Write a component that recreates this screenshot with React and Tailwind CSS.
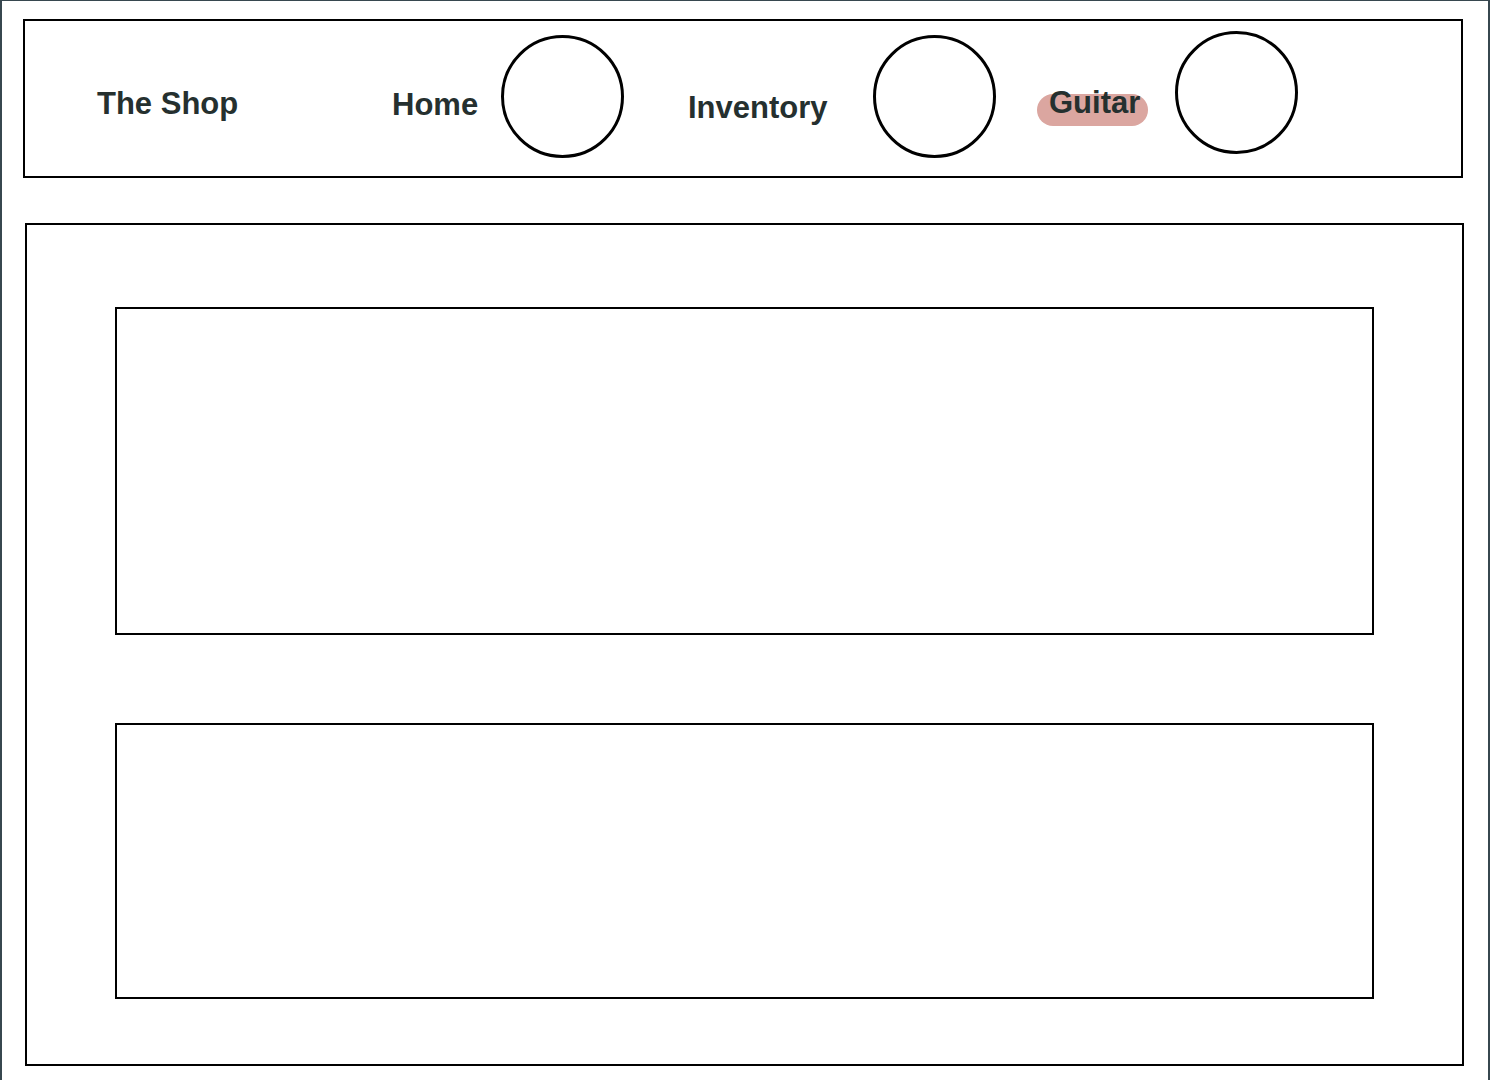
const navText = 'block shrink-0 text-[31px] font-bold leading-none text-[#25302f] whitespace-nowrap';
const circle = 'block shrink-0 size-[123px] rounded-full border-[3px] border-black';

export default function App() {
  return (
    <div
      className="h-[1080px] w-[1490px] overflow-hidden border-x-2 border-t border-[#37474f] bg-white"
      style={{ fontFamily: '"Liberation Sans", Arial, sans-serif' }}
    >
      {/* Top nav */}
      <header className="ml-[21px] mt-[18px] flex h-[159px] w-[1440px] items-start border-2 border-black">
        <span className={`${navText} ml-[72px] mt-[67px] w-[140px]`}>The Shop</span>
        <span className={`${navText} ml-[155px] mt-[68px] w-[85px]`}>Home</span>
        <span className={`${circle} ml-[24px] mt-[14px]`} />
        <span className={`${navText} ml-[64px] mt-[71px] w-[138px]`}>Inventory</span>
        <span className={`${circle} ml-[47px] mt-[14px]`} />
        <span className={`${navText} relative ml-[53px] mt-[66px] w-[89px]`}>
          <span className="absolute -left-3 -right-2.5 top-[7px] h-8 rounded-full bg-[#dba6a0]" />
          <span className="relative">Guitar</span>
        </span>
        <span className={`${circle} ml-[37px] mt-[10px]`} />
      </header>

      {/* Content */}
      <main className="ml-[23px] mt-[45px] flex h-[843px] w-[1439px] flex-col gap-[88px] border-2 border-black pl-[88px] pt-[82px]">
        <section className="h-[328px] w-[1259px] border-2 border-black" />
        <section className="h-[276px] w-[1259px] border-2 border-black" />
      </main>
    </div>
  );
}
